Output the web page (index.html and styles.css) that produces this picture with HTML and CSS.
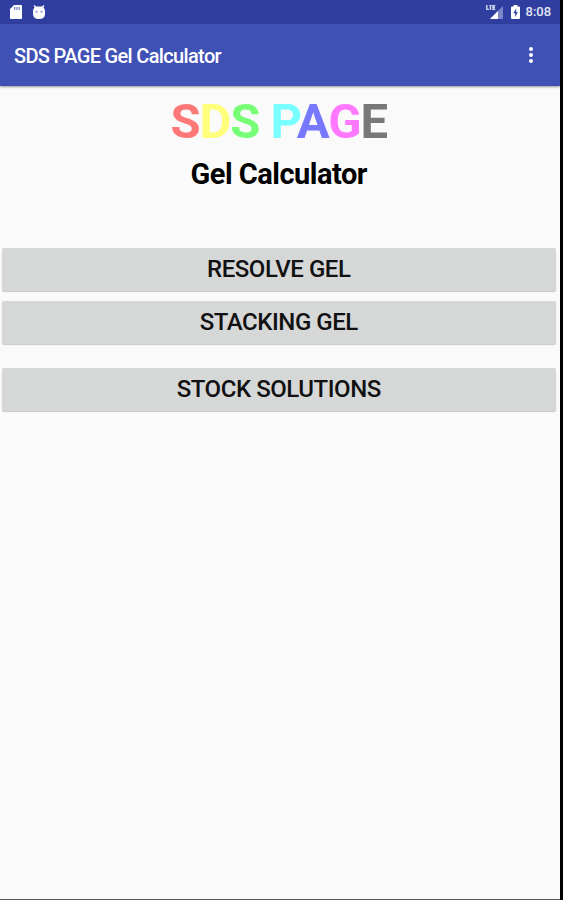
FILE: index.html
```html
<!DOCTYPE html>
<html lang="en">
<head>
    <meta charset="UTF-8">
    <meta name="viewport" content="width=device-width, initial-scale=1.0">
    <title>SDS PAGE Gel Calculator</title>
    <link rel="stylesheet" href="styles.css">
</head>
<body>
    <div class="screen">
        <div class="status-bar">
            <svg class="icon-sd" width="12" height="14" viewBox="0 0 12 14">
                <path fill="#fff" d="M4 0h7a1 1 0 0 1 1 1v12a1 1 0 0 1-1 1H1a1 1 0 0 1-1-1V4z"/>
                <path fill="#7f8acb" d="M4 2h1.3v3H4zM6.3 2h1.3v3H6.3zM8.6 2h1.3v3H8.6z"/>
            </svg>
            <svg class="icon-droid" width="12" height="14" viewBox="0 0 12 14">
                <path fill="#fff" d="M1.300 0l1.700 1.500h6L10.700 0l.6.6-.8 1.900Q12 4 12 6v3q0 5-6 5T0 9V6q0-2 1.500-3.500L.7.6z"/>
                <path fill="#7f8acb" d="M2.500 6h2v1.500h-2zM7.500 6h2v1.500h-2z"/>
            </svg>
            <div class="status-right">
                <svg class="icon-signal" width="18" height="15" viewBox="0 0 18 15">
                    <path fill="#7c86c8" d="M17 1v13H4z"/>
                    <path fill="#fff" d="M12 6v8H4z"/>
                    <path fill="none" stroke="#d5d9f0" stroke-width="1.400" d="M.8 0v4.400h2.200M3.300.6h2.400M4.500.6V5M9.300.6H7v3.800h2.300M7 2.500h2"/>
                </svg>
                <svg class="icon-battery" width="9" height="14" viewBox="0 0 9 14">
                    <path fill="#fff" d="M2.700 0h3.600v1.500H8a1 1 0 0 1 1 1V13a1 1 0 0 1-1 1H1a1 1 0 0 1-1-1V2.500a1 1 0 0 1 1-1h1.700z"/>
                    <path fill="#303f9f" d="M5.200 3.500L2.300 8.300h1.900V12l2.700-4.700H5.200z"/>
                </svg>
                <span class="clock">8:08</span>
            </div>
        </div>
        <div class="app-bar">
            <span class="app-title">SDS PAGE Gel Calculator</span>
            <div class="menu">
                <i></i>
                <i></i>
                <i></i>
            </div>
        </div>
        <div class="content">
            <h1><span class="red">S</span><span class="yellow">D</span><span class="green">S</span> <span class="cyan">P</span><span class="blue">A</span><span class="pink">G</span><span class="gray">E</span></h1>
            <h2>Gel Calculator</h2>
            <button class="btn">RESOLVE GEL</button>
            <button class="btn">STACKING GEL</button>
            <button class="btn btn-stock">STOCK SOLUTIONS</button>
        </div>
    </div>
</body>
</html>
```
FILE: styles.css
```css
body {
    margin: 0;
    background: #000;
    font-family: Roboto, "Liberation Sans", sans-serif;
}

.screen {
    box-sizing: border-box;
    width: 559.5px;
    height: 900px;
    display: flex;
    flex-direction: column;
    background: #fafafa;
    border-bottom: 1px solid #555;
}

.status-bar {
    height: 24px;
    flex: none;
    display: flex;
    align-items: center;
    padding: 0 8px 0 10px;
    box-sizing: border-box;
    background: #303f9f;
}

.icon-droid {
    margin-left: 11px;
}

.status-right {
    display: flex;
    align-items: center;
    margin-left: auto;
}

.icon-battery {
    margin-left: 7px;
}

.clock {
    margin-left: 6px;
    width: 26px;
    font-size: 13px;
    font-weight: 500;
    line-height: 24px;
    color: #e4e7f6;
}

.app-bar {
    height: 62px;
    flex: none;
    display: flex;
    align-items: center;
    justify-content: space-between;
    padding: 0 27px 0 14px;
    box-sizing: border-box;
    background: #3f51b5;
    box-shadow: 0 1px 2px rgba(0, 0, 0, 0.4);
}

.app-title {
    font-size: 20px;
    font-weight: 500;
    line-height: 24px;
    padding-top: 2px;
    letter-spacing: -0.660px;
    color: #fff;
}

.menu {
    display: flex;
    flex-direction: column;
    gap: 2px;
}

.menu i {
    width: 4px;
    height: 4px;
    border-radius: 50%;
    background: #fff;
}

.content {
    display: flex;
    flex-direction: column;
    padding: 7px 4px 0 2px;
    text-align: center;
}

h1 {
    margin: 0;
    font-size: 49px;
    font-weight: 700;
    line-height: 58px;
    letter-spacing: -1.150px;
}

h2 {
    margin: 5px 0 56px;
    font-size: 29px;
    font-weight: 700;
    line-height: 36px;
    letter-spacing: -0.500px;
    color: #000;
}

.red { color: #ff7878; }
.yellow { color: #ffff7c; }
.green { color: #78ff78; }
.cyan { color: #78ffff; }
.blue { color: #7878ff; }
.pink { color: #ff78ff; }
.gray { color: #787878; }

.btn {
    height: 43px;
    margin: 0 0 10px;
    padding: 0;
    border: none;
    border-radius: 2px;
    background: #d6d7d7;
    box-shadow: 0 1px 1px rgba(0, 0, 0, 0.2);
    font-family: inherit;
    font-size: 24px;
    font-weight: 500;
    line-height: 43px;
    letter-spacing: -0.450px;
    color: #111;
}

.btn-stock {
    margin-top: 14px;
}
```
